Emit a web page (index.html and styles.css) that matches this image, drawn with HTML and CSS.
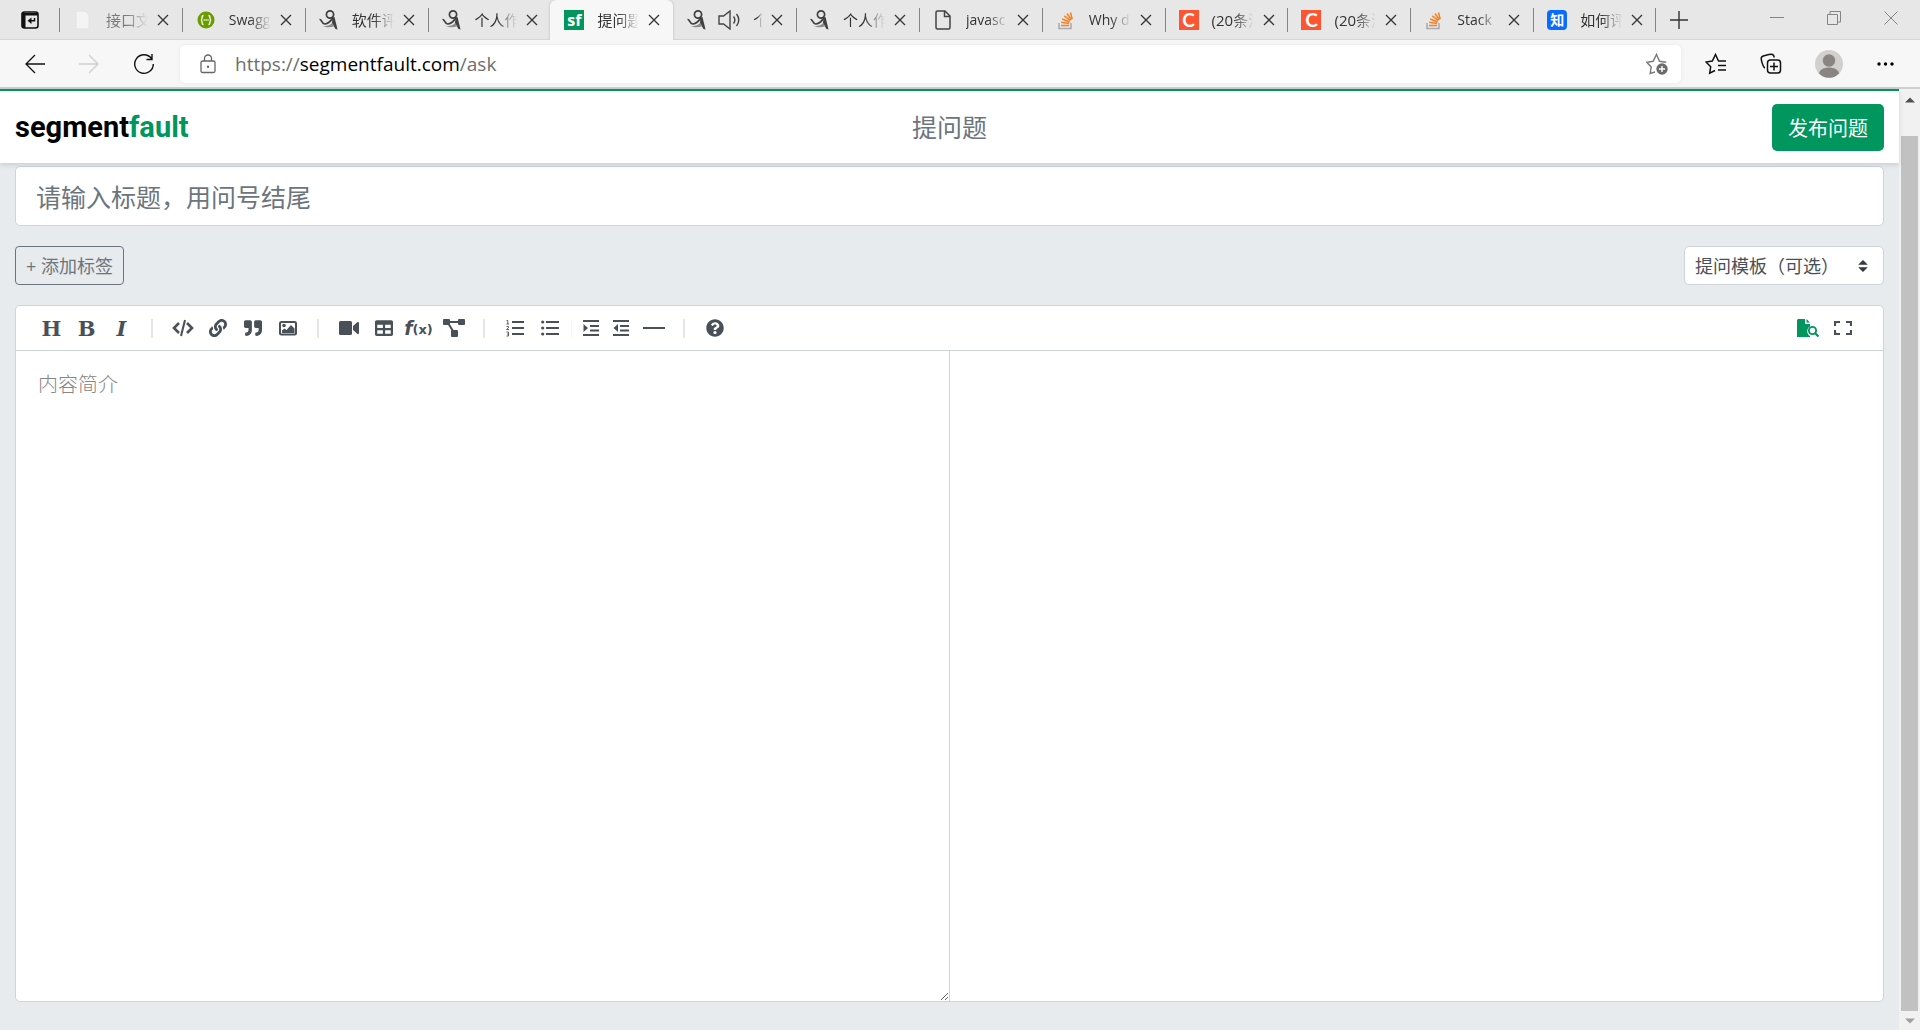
FILE: index.html
```html
<!DOCTYPE html>
<html lang="zh-CN">
<head>
<meta charset="utf-8">
<title>提问题 - SegmentFault</title>
<link rel="stylesheet" href="styles.css">
</head>
<body>
<svg class="defs" aria-hidden="true">
  <symbol id="x" viewBox="0 0 12 12"><path d="M1 1l10 10M11 1L1 11" fill="none" stroke="currentColor" stroke-width="1.3"/></symbol>
  <symbol id="blog" viewBox="0 0 20 20"><g fill="none" stroke="#3f3f3f"><circle cx="11" cy="4.500" r="3.600" stroke-width="1.700"/><path d="M.5 9.500c2.500-.5 2 5 5.500 4.500 3.500-.5 6-3 8-6.500" stroke-width="1.600"/></g><path d="M13.500 7.500l2-.5L18.500 19.500l-2-.5-3.500-6z" fill="#3f3f3f"/><path d="M3 15.500c4 1.500 8 0 10-2.500l2.500 3c-4 1.500-8 2-12.500-.5z" fill="#8a8a8a"/></symbol>
  <symbol id="stack" viewBox="0 0 20 20"><path d="M3 13v5.500h12V13" fill="none" stroke="#a9adb3" stroke-width="1.600"/><path d="M5 15.500h8M5.200 12.300l8 1.100M6.200 9l7.300 3M8.300 5.800l6 4.800M11 3.500l4.300 6.200M14.500 2.500l1.700 6.500" fill="none" stroke="#f48024" stroke-width="1.500"/></symbol>
  <symbol id="doc" viewBox="0 0 20 20"><path d="M4.500 1h7.500l5 5v11.500a1.500 1.500 0 0 1-1.500 1.500h-11A1.500 1.500 0 0 1 3 17.500v-15A1.500 1.500 0 0 1 4.500 1zM11.500 1v5.500H17" fill="none" stroke="#444" stroke-width="1.500"/></symbol>
</svg>

<header class="browser">
  <div class="tabstrip">
    <button class="tab-menu" aria-label="标签操作菜单"><svg width="20" height="20" viewBox="0 0 20 20"><rect x="2" y="2" width="16" height="16" rx="2.500" fill="none" stroke="#111" stroke-width="1.600"/><path d="M2 3h16v2.500H5.500V18H2z" fill="#111"/><path d="M14.500 8v2.800H9.500" fill="none" stroke="#111" stroke-width="1.500"/><path d="M11.500 7.500v6.500L7.500 10.800z" fill="#111"/></svg></button>
    <nav class="tabs">
      <div class="tab sep faded"><svg class="fav" viewBox="0 0 20 20"><path d="M3 1h9l4 4v14H3z" fill="#f4f4f4" stroke="#e2e2e2"/></svg><span class="label">接口文</span><button class="close" aria-label="关闭"><svg><use href="#x"/></svg></button></div>
      <div class="tab sep"><svg class="fav" viewBox="0 0 20 20"><circle cx="10" cy="10" r="8.500" fill="#6a9c00"/><path d="M7.500 5.500C5 5.500 7 9.500 5 10c2 .5 0 4.500 2.500 4.500M12.500 5.500c2.500 0 .5 4 2.500 4.500-2 .5 0 4.500-2.500 4.500" fill="none" stroke="#fff" stroke-width="1.300"/><path d="M7.600 10h5" stroke="#fff" stroke-width="1.300" stroke-dasharray="1.200 .7"/></svg><span class="label latin">Swagg</span><button class="close" aria-label="关闭"><svg><use href="#x"/></svg></button></div>
      <div class="tab sep"><svg class="fav"><use href="#blog"/></svg><span class="label">软件评</span><button class="close" aria-label="关闭"><svg><use href="#x"/></svg></button></div>
      <div class="tab sep"><svg class="fav"><use href="#blog"/></svg><span class="label">个人作</span><button class="close" aria-label="关闭"><svg><use href="#x"/></svg></button></div>
      <div class="tab active"><span class="fav sf">sf</span><span class="label">提问题</span><button class="close" aria-label="关闭"><svg><use href="#x"/></svg></button></div>
      <div class="tab"><svg class="fav"><use href="#blog"/></svg><svg class="speaker" viewBox="0 0 22 20"><path d="M1 6h4.500L12 1v18l-6.500-5H1z" fill="none" stroke="#444" stroke-width="1.400"/><path d="M15.500 6.500c1.600 2 1.600 5 0 7M18.500 4c3 3.500 3 8.500 0 12" fill="none" stroke="#444" stroke-width="1.400"/></svg><span class="label">个</span><button class="close" aria-label="关闭"><svg><use href="#x"/></svg></button></div>
      <div class="tab sep"><svg class="fav"><use href="#blog"/></svg><span class="label">个人作</span><button class="close" aria-label="关闭"><svg><use href="#x"/></svg></button></div>
      <div class="tab sep"><svg class="fav"><use href="#doc"/></svg><span class="label latin">javasc</span><button class="close" aria-label="关闭"><svg><use href="#x"/></svg></button></div>
      <div class="tab sep"><svg class="fav"><use href="#stack"/></svg><span class="label latin">Why d</span><button class="close" aria-label="关闭"><svg><use href="#x"/></svg></button></div>
      <div class="tab sep"><span class="fav csdn">C</span><span class="label">(20条消</span><button class="close" aria-label="关闭"><svg><use href="#x"/></svg></button></div>
      <div class="tab sep"><span class="fav csdn">C</span><span class="label">(20条消</span><button class="close" aria-label="关闭"><svg><use href="#x"/></svg></button></div>
      <div class="tab sep"><svg class="fav"><use href="#stack"/></svg><span class="label latin">Stack</span><button class="close" aria-label="关闭"><svg><use href="#x"/></svg></button></div>
      <div class="tab sep"><span class="fav zhihu">知</span><span class="label">如何评</span><button class="close" aria-label="关闭"><svg><use href="#x"/></svg></button></div>
    </nav>
    <div class="window">
      <button class="new-tab" aria-label="新建标签页"><svg width="18" height="18" viewBox="0 0 18 18"><path d="M9 0v18M0 9h18" stroke="#333" stroke-width="1.400"/></svg></button>
      <div class="window-controls">
        <button aria-label="最小化"><svg width="14" height="14" viewBox="0 0 14 14"><path d="M0 6.500h14"/></svg></button>
        <button aria-label="还原"><svg width="14" height="14" viewBox="0 0 14 14"><path d="M.5 3.500h10v10h-10zM3 3.500v-3h10.500V11h-3"/></svg></button>
        <button aria-label="关闭窗口"><svg width="14" height="14" viewBox="0 0 14 14"><path d="M.5.5l13 13M13.500.5l-13 13"/></svg></button>
      </div>
    </div>
  </div>

  <div class="navbar">
    <div class="nav-buttons">
      <button aria-label="后退"><svg width="20" height="20" viewBox="0 0 20 20"><path d="M20 10H1M10 1l-9 9 9 9" fill="none" stroke="#111" stroke-width="1.300"/></svg></button>
      <button aria-label="前进"><svg width="20" height="20" viewBox="0 0 20 20"><path d="M0 10h19M10 1l9 9-9 9" fill="none" stroke="#cfcfcf" stroke-width="1.300"/></svg></button>
      <button aria-label="刷新"><svg width="22" height="22" viewBox="0 0 22 22"><path d="M18.500 5.500A9.300 9.300 0 1 0 20.300 11M19 1v5.500h-5.500" fill="none" stroke="#111" stroke-width="1.400"/></svg></button>
    </div>
    <div class="address">
      <svg width="16" height="20" viewBox="0 0 16 20"><rect x="1" y="7" width="14" height="11.500" rx="1.500" fill="none" stroke="#666" stroke-width="1.300"/><path d="M4.500 7V4.500a3.500 3.500 0 0 1 7 0V7" fill="none" stroke="#666" stroke-width="1.300"/><circle cx="8" cy="12.700" r="1.200" fill="#666"/></svg>
      <p class="url">https://<b>segmentfault.com</b>/ask</p>
      <button aria-label="添加到收藏夹"><svg width="22" height="22" viewBox="0 0 22 22"><path d="M9 19l-4.800 1.500 1-6.500L.8 9.300l6.300-1L10.500 1.500l3 6.800 6.700 1" fill="none" stroke="#777" stroke-width="1.400"/><circle cx="16" cy="16" r="5.700" fill="#6b6b6b"/><path d="M16 13v6M13 16h6" stroke="#fff" stroke-width="1.400"/></svg></button>
    </div>
    <div class="nav-tools">
      <button aria-label="收藏夹"><svg width="22" height="22" viewBox="0 0 22 22"><path d="M10 17.500l-5.300 2.700 1-6.500L1 9l6.300-1L10.500 1.500l3 6.500H21M13 12.500h8M13 17h8" fill="none" stroke="#111" stroke-width="1.500"/></svg></button>
      <button aria-label="集锦"><svg width="22" height="22" viewBox="0 0 22 22"><path d="M5 15C3 14.500 1.200 7 1.200 5.500S2 3.300 4 2.800s7-2 8.500-1.300S14 3.500 14.300 4.500" fill="none" stroke="#111" stroke-width="1.500"/><rect x="7.500" y="7" width="13" height="13" rx="3" fill="none" stroke="#111" stroke-width="1.500"/><path d="M14 9.500v8M10 13.500h8" stroke="#111" stroke-width="1.500"/></svg></button>
      <button aria-label="个人资料"><svg width="28" height="28" viewBox="0 0 28 28"><circle cx="14" cy="14" r="14" fill="#d2d0ce"/><circle cx="14" cy="10.500" r="6.200" fill="#8a8583"/><path d="M4 23.500c1-8 19-8 20 0a14 14 0 0 1-20 0z" fill="#8a8583"/></svg></button>
      <button aria-label="更多"><svg width="18" height="6" viewBox="0 0 18 6"><circle cx="3" cy="3" r="1.700"/><circle cx="9.500" cy="3" r="1.700"/><circle cx="16" cy="3" r="1.700"/></svg></button>
    </div>
  </div>
</header>

<div class="viewport">
  <div class="page">
    <header class="site-header">
      <a class="logo" href="#">segment<span>fault</span></a>
      <h1>提问题</h1>
      <button class="publish">发布问题</button>
    </header>
    <main class="ask">
      <input class="title" type="text" aria-label="标题" placeholder="请输入标题，用问号结尾">
      <div class="meta">
        <button class="add-tag">+ 添加标签</button>
        <select class="template" aria-label="提问模板"><option>提问模板（可选）</option></select>
      </div>
      <section class="editor">
        <div class="tools">
          <button class="slab" aria-label="标题">H</button>
          <button class="slab" aria-label="粗体">B</button>
          <button class="slab italic" aria-label="斜体">I</button>
          <i class="rule"></i>
          <button aria-label="代码"><svg width="22" height="18" viewBox="0 0 22 18"><path d="M7 4L2 9l5 5M15 4l5 5-5 5" fill="none" stroke="currentColor" stroke-width="2.600"/><path d="M13 1L9 17" stroke="currentColor" stroke-width="2"/></svg></button>
          <button aria-label="链接"><svg width="18" height="18" viewBox="0 0 512 512"><path d="M326.612 185.391c59.747 59.809 58.927 155.698.36 214.590-.11.120-.240.250-.360.370l-67.200 67.200c-59.270 59.270-155.699 59.262-214.960 0-59.270-59.260-59.270-155.700 0-214.960l37.106-37.106c9.840-9.840 26.786-3.300 27.294 10.606.648 17.722 3.826 35.527 9.690 52.721 1.986 5.822.567 12.262-3.783 16.612l-13.087 13.087c-28.026 28.026-28.905 73.660-1.155 101.960 28.024 28.579 74.086 28.749 102.325.510l67.200-67.190c28.191-28.191 28.073-73.757 0-101.830-3.701-3.694-7.429-6.564-10.341-8.569a16.037 16.037 0 0 1-6.947-12.606c-.396-10.567 3.348-21.456 11.698-29.806l21.054-21.055c5.521-5.521 14.182-6.199 20.584-1.731a152.482 152.482 0 0 1 20.522 17.197zM467.547 44.449c-59.261-59.262-155.690-59.270-214.960 0l-67.200 67.200c-.120.120-.250.250-.360.370-58.566 58.892-59.387 154.781.36 214.590a152.454 152.454 0 0 0 20.521 17.196c6.402 4.468 15.064 3.789 20.584-1.731l21.054-21.055c8.350-8.350 12.094-19.239 11.698-29.806a16.037 16.037 0 0 0-6.947-12.606c-2.912-2.005-6.640-4.875-10.341-8.569-28.073-28.073-28.191-73.639 0-101.830l67.200-67.190c28.239-28.239 74.300-28.069 102.325.510 27.750 28.300 26.872 73.934-1.155 101.960l-13.087 13.087c-4.350 4.350-5.769 10.790-3.783 16.612 5.864 17.194 9.042 34.999 9.690 52.721.509 13.906 17.454 20.446 27.294 10.606l37.106-37.106c59.271-59.259 59.271-155.699.001-214.959z"/></svg></button>
          <button aria-label="引用"><svg width="18" height="18" viewBox="0 0 512 512"><path d="M464 32H336c-26.500 0-48 21.500-48 48v128c0 26.500 21.500 48 48 48h80v64c0 35.300-28.700 64-64 64h-8c-13.300 0-24 10.700-24 24v48c0 13.300 10.700 24 24 24h8c88.400 0 160-71.600 160-160V80c0-26.500-21.500-48-48-48zm-288 0H48C21.500 32 0 53.500 0 80v128c0 26.500 21.500 48 48 48h80v64c0 35.300-28.700 64-64 64h-8c-13.300 0-24 10.700-24 24v48c0 13.300 10.700 24 24 24h8c88.400 0 160-71.600 160-160V80c0-26.500-21.500-48-48-48z"/></svg></button>
          <button aria-label="图片"><svg width="18" height="18" viewBox="0 0 18 18"><rect x="1" y="3" width="16" height="12.500" rx="1.500" fill="none" stroke="currentColor" stroke-width="2"/><circle cx="5" cy="6.500" r="1.800"/><path d="M3 14v-2.500l2.500-2L7.500 11l4.500-5 3.500 3.500V14z"/></svg></button>
          <i class="rule"></i>
          <button aria-label="视频"><svg width="20" height="18" viewBox="0 0 20 18"><rect y="2" width="13" height="14" rx="1.500"/><path d="M14 7l4.500-4q1.500-.5 1.500 1v10q0 1.500-1.500 1L14 11z"/></svg></button>
          <button aria-label="表格"><svg width="18" height="18" viewBox="0 0 512 512"><path d="M464 32H48C21.490 32 0 53.490 0 80v352c0 26.510 21.490 48 48 48h416c26.510 0 48-21.490 48-48V80c0-26.510-21.490-48-48-48zM224 416H64v-96h160v96zm0-160H64v-96h160v96zm224 160H288v-96h160v96zm0-160H288v-96h160v96z"/></svg></button>
          <button class="formula" aria-label="公式"><em>f</em><small>(x)</small></button>
          <button aria-label="流程图"><svg width="22" height="18" viewBox="0 0 22 18"><rect width="7" height="6" rx="1"/><rect x="15" width="7" height="6" rx="1"/><rect x="8" y="11" width="7" height="7" rx="1"/><path d="M6 3h10M5 4l5 8" stroke="currentColor" stroke-width="2"/></svg></button>
          <i class="rule"></i>
          <button aria-label="有序列表"><svg width="18" height="18" viewBox="0 0 18 18"><path d="M6 3h12M6 9h12M6 15h12" stroke="currentColor" stroke-width="2"/><path d="M.5 1.500h1.300V5M.5 5h2.500M.5 7.500h2v1.300l-2 1.700h2.500M.5 13h2v4h-2M1 15h1.500" fill="none" stroke="currentColor" stroke-width=".9"/></svg></button>
          <button aria-label="无序列表"><svg width="18" height="18" viewBox="0 0 18 18"><path d="M5 3h13M5 9h13M5 15h13" stroke="currentColor" stroke-width="2"/><circle cx="1.700" cy="3" r="1.600"/><circle cx="1.700" cy="9" r="1.600"/><circle cx="1.700" cy="15" r="1.600"/></svg></button>
          <i class="rule faint"></i>
          <button class="narrow" aria-label="增加缩进"><svg width="16" height="18" viewBox="0 0 16 18"><path d="M0 2h16M7 7h9M7 11.500h9M0 16h16" stroke="currentColor" stroke-width="1.900"/><path d="M.5 5l4.500 4-4.500 4z"/></svg></button>
          <button class="narrow" aria-label="减少缩进"><svg width="16" height="18" viewBox="0 0 16 18"><path d="M0 2h16M7 7h9M7 11.500h9M0 16h16" stroke="currentColor" stroke-width="1.900"/><path d="M5 5L.5 9 5 13z"/></svg></button>
          <button aria-label="分割线"><svg width="22" height="18" viewBox="0 0 22 18"><path d="M0 9h22" stroke="currentColor" stroke-width="2"/></svg></button>
          <i class="rule"></i>
          <button aria-label="帮助"><svg width="18" height="18" viewBox="0 0 512 512"><path d="M504 256c0 136.997-111.043 248-248 248S8 392.997 8 256C8 119.083 119.043 8 256 8s248 111.083 248 248zM262.655 90c-54.497 0-89.255 22.957-116.549 63.758-3.536 5.286-2.353 12.415 2.715 16.258l34.699 26.310c5.205 3.947 12.621 3.008 16.665-2.122 17.864-22.658 30.113-35.797 57.303-35.797 20.429 0 45.698 13.148 45.698 32.958 0 14.976-12.363 22.667-32.534 33.976C247.128 238.528 216 254.941 216 296v4c0 6.627 5.373 12 12 12h56c6.627 0 12-5.373 12-12v-1.333c0-28.462 83.186-29.647 83.186-106.667 0-58.002-60.165-102-116.531-102zM256 338c-25.365 0-46 20.635-46 46 0 25.364 20.635 46 46 46s46-20.636 46-46c0-25.365-20.635-46-46-46z"/></svg></button>
          <span class="spacer"></span>
          <button class="green" aria-label="预览"><svg width="22" height="18" viewBox="0 0 22 18"><path d="M1 0h7v5h5v2.500a5.500 5.500 0 0 0 0 9.500v1H0V1zM9.500 0L13 3.500H9.500z"/><circle cx="15.500" cy="11.500" r="3.600" fill="none" stroke="currentColor" stroke-width="1.900"/><path d="M18 14l3.500 3.500" stroke="currentColor" stroke-width="2.200"/></svg></button>
          <button aria-label="全屏"><svg width="18" height="18" viewBox="0 0 18 18"><path d="M1 7V3h5M12 3h5v4M17 11v4h-5M6 15H1v-4" fill="none" stroke="currentColor" stroke-width="2.200"/></svg></button>
        </div>
        <div class="panes">
          <textarea aria-label="内容" placeholder="内容简介"></textarea>
          <div class="preview"></div>
        </div>
      </section>
    </main>
  </div>
  <div class="scrollbar" aria-hidden="true"><svg viewBox="0 0 10 6"><path d="M0 5.500h10L5 .5z" fill="#505050"/></svg><div class="thumb"></div><svg viewBox="0 0 10 6"><path d="M0 .5h10L5 5.500z" fill="#a0a0a0"/></svg></div>
</div>
</body>
</html>
```
FILE: styles.css
```css
* { box-sizing: border-box; }

body {
  margin: 0;
  min-height: 100vh;
  display: flex;
  flex-direction: column;
  background: #e7ebee;
  font-family: "Open Sans", "Noto Sans CJK SC", sans-serif;
  color: #333;
}

button {
  display: flex;
  align-items: center;
  justify-content: center;
  margin: 0;
  padding: 0;
  border: 0;
  background: none;
  color: inherit;
  font: inherit;
}

svg { display: block; flex: none; }
.defs { position: absolute; width: 0; height: 0; }

/* Browser window */
.tabstrip {
  display: flex;
  height: 40px;
  background: #e7e7e7;
  box-shadow: inset 0 -1px #d6d6d6;
}
.tab-menu { width: 59px; }
.tabs {
  flex: 1;
  display: grid;
  grid-template-columns: repeat(13, minmax(0, 1fr));
}
.tab {
  display: flex;
  align-items: center;
  padding-left: 14px;
  background: linear-gradient(#858585, #858585) 0 8px / 0 24px no-repeat;
}
.tab.sep { background-size: 1px 24px; }
.tab:last-child {
  background: linear-gradient(#858585, #858585) 0 8px / 1px 24px no-repeat,
    linear-gradient(#858585, #858585) 100% 8px / 1px 24px no-repeat;
}
.tab.active {
  background: #f7f7f7;
  border-radius: 6px 6px 0 0;
  box-shadow: 0 0 3px #bbb;
  clip-path: inset(0 -4px 0 -4px);
}
.fav {
  flex: none;
  width: 20px;
  height: 20px;
  display: flex;
  align-items: center;
  justify-content: center;
  color: #fff;
  line-height: 20px;
}
.sf { background: #00965e; font-size: 16px; font-weight: 700; }
.csdn { background: #fc5531; font-family: Lato, sans-serif; font-size: 19px; font-weight: 700; }
.zhihu { background: #0a6cff; border-radius: 4px; font-size: 14px; font-weight: 700; }
.label {
  width: 42px;
  margin-left: 13px;
  overflow: hidden;
  white-space: nowrap;
  font-size: 15px;
  line-height: 24px;
  mask-image: linear-gradient(90deg, #000 50%, transparent);
}
.latin { font-size: 14px; }
.faded .label { opacity: .6; }
.speaker { width: 22px; height: 20px; margin-left: 11px; }
.speaker + .label { width: 9px; }
.close { margin-left: 9px; }
.close svg { width: 12px; height: 12px; }
.window {
  width: 264px;
  display: flex;
  justify-content: space-between;
  padding: 0 22px 0 14px;
}
.window-controls { display: flex; gap: 43px; padding-bottom: 4px; }
.window-controls path { fill: none; stroke: #858585; }

.navbar {
  display: flex;
  align-items: center;
  height: 49px;
  padding: 0 26px 0 25px;
  background: #f7f7f7;
  border-bottom: 2px solid #cfcfcf;
}
.nav-buttons { display: flex; gap: 34px; width: 155px; }
.address {
  flex: 1;
  display: flex;
  align-items: center;
  height: 38px;
  padding: 0 13px 0 20px;
  background: #fff;
  border-radius: 5px;
  box-shadow: 0 0 4px #e6e6e6;
}
.url { flex: 1; margin: 0 0 0 19px; font-size: 19px; line-height: 28px; color: #6e6e6e; }
.url b { font-weight: 400; color: #000; }
.nav-tools { display: flex; align-items: center; gap: 33px; padding-left: 24px; }

/* Page */
.viewport { flex: 1; display: flex; }
.page { flex: 1; display: flex; flex-direction: column; min-width: 0; }
.site-header {
  display: grid;
  grid-template-columns: 1fr auto 1fr;
  align-items: center;
  height: 74px;
  padding: 0 15px;
  border-top: 2px solid #00965e;
  background: #fff;
  box-shadow: 0 2px 5px #0000001f;
  z-index: 1;
}
.logo {
  font-family: Roboto, "Liberation Sans", sans-serif;
  font-size: 29px;
  font-weight: 700;
  line-height: 40px;
  color: #000;
  text-decoration: none;
}
.logo span { color: #00965e; }
.site-header h1 { margin: 0; font-size: 25px; font-weight: 400; line-height: 36px; color: #6c757d; }
.publish {
  justify-self: end;
  height: 47px;
  padding: 0 16px;
  border-radius: 5px;
  background: #00965e;
  color: #fff;
  font-size: 20px;
}
.ask {
  flex: 1;
  display: flex;
  flex-direction: column;
  gap: 20px;
  padding: 3px 15px 28px;
}
.title, .template, .editor { border: 1px solid #ced4da; border-radius: 5px; background: #fff; }
.title { height: 60px; width: 100%; padding: 2px 20px 0; font: inherit; font-size: 25px; }
.title::placeholder { color: #6c757d; opacity: 1; }
.meta { display: flex; justify-content: space-between; }
.add-tag {
  height: 39px;
  padding: 0 10px 2px;
  border: 1px solid #6c757d;
  border-radius: 4px;
  color: #6c757d;
  font-size: 18px;
}
.template {
  appearance: none;
  width: 200px;
  height: 39px;
  padding: 0 10px;
  color: #495057;
  font: inherit;
  font-size: 18px;
  background: #fff url("data:image/svg+xml,%3Csvg xmlns='http://www.w3.org/2000/svg' viewBox='0 0 4 5'%3E%3Cpath fill='%23343a40' d='M2 0L0 2h4zm0 5L0 3h4z'/%3E%3C/svg%3E") no-repeat right 15px center / 10px 12px;
}

.editor { flex: 1; display: flex; flex-direction: column; }
.tools {
  display: flex;
  align-items: center;
  height: 45px;
  padding: 0 23px 0 18px;
  border-bottom: 1px solid #ced4da;
  color: #495057;
}
.tools button { width: 35px; height: 32px; }
.tools button.narrow { width: 30px; }
.tools svg { fill: currentColor; }
.tools .slab { font-family: "DejaVu Serif", serif; font-size: 21px; font-weight: 700; }
.tools .italic { font-style: italic; }
.formula { font-family: "DejaVu Sans", sans-serif; font-weight: 700; line-height: 18px; }
.formula em { font-size: 19px; }
.formula small { font-size: 13px; padding-top: 4px; }
.rule { width: 2px; height: 19px; margin: 0 12px; background: #e3e5e8; }
.rule.faint { width: 1px; margin: 0 4px; background: #f5f6f7; }
.spacer { flex: 1; }
.tools .green { color: #00965e; }
.panes { flex: 1; display: grid; grid-template-columns: 1fr 1fr; }
textarea {
  width: 100%;
  height: 100%;
  min-height: 300px;
  padding: 18px 22px;
  border: 0;
  border-right: 1px solid #ced4da;
  border-radius: 0 0 0 5px;
  background: transparent;
  font-family: "Noto Sans CJK SC", sans-serif;
  font-size: 20px;
  font-weight: 300;
  line-height: 30px;
  resize: both;
}
textarea::placeholder { color: #868686; opacity: 1; }

.scrollbar {
  display: flex;
  flex-direction: column;
  align-items: center;
  gap: 33px;
  width: 21px;
  padding: 8px 0 6px;
  background: #f1f1f1;
}
.scrollbar svg { width: 10px; height: 6px; }
.scrollbar svg:last-child { margin-top: -26px; }
.thumb { flex: 1; width: 17px; background: #c1c1c1; }
```
